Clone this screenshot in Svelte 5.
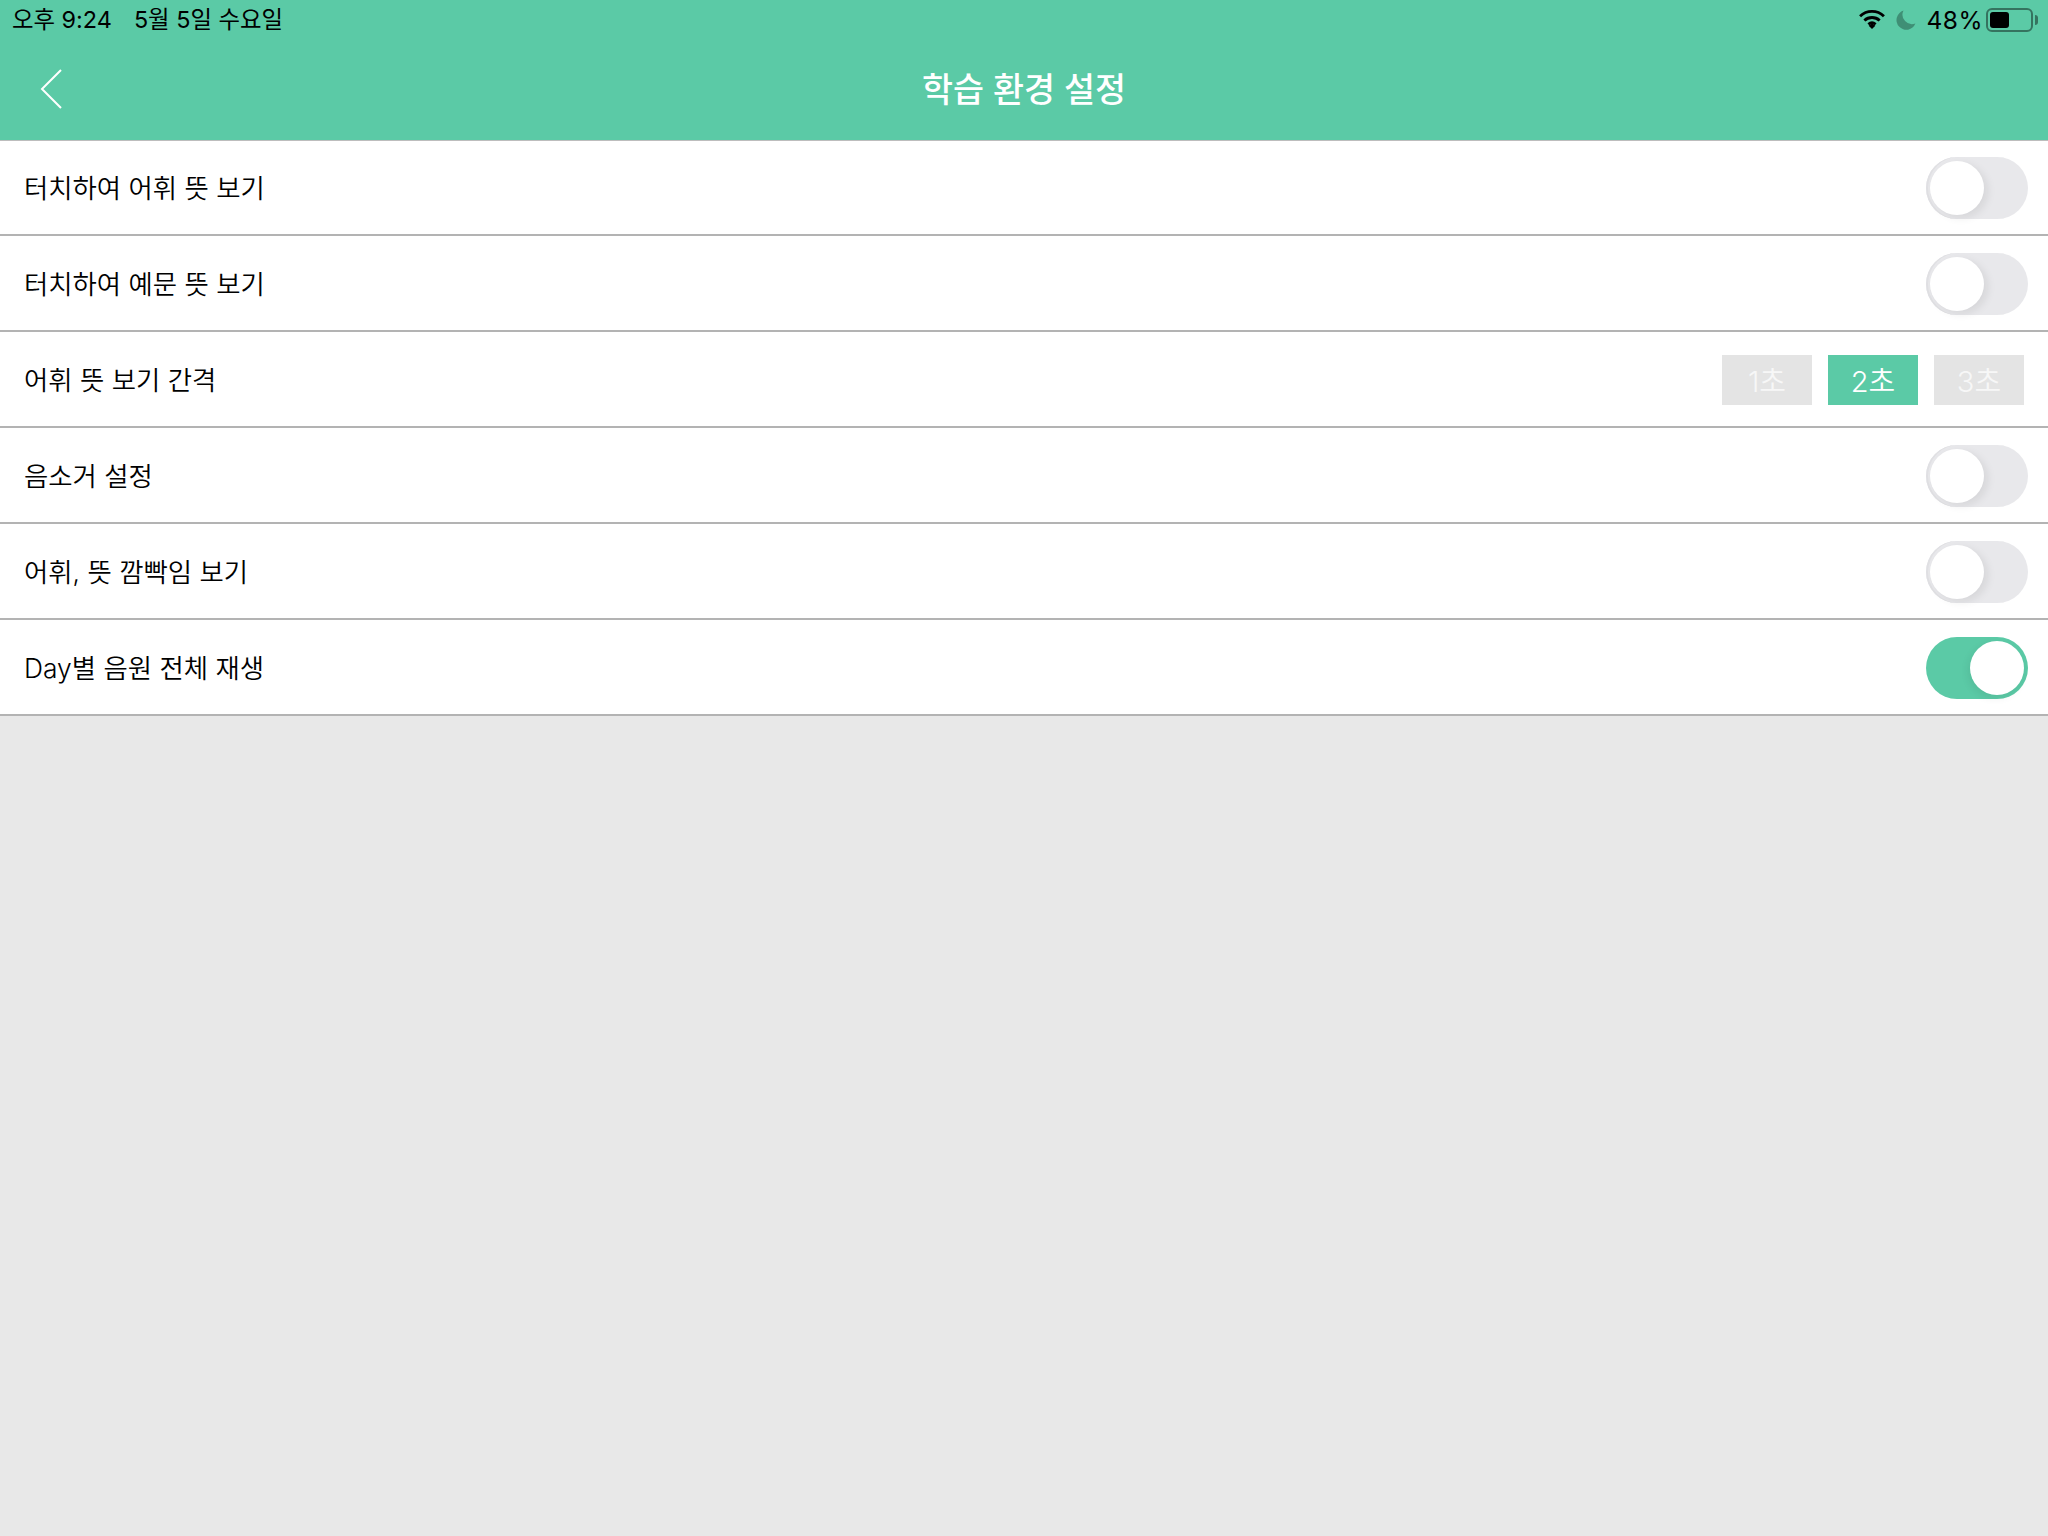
<script>
  const rows = [
    { label: '터치하여 어휘 뜻 보기', type: 'toggle', on: false },
    { label: '터치하여 예문 뜻 보기', type: 'toggle', on: false },
    { label: '어휘 뜻 보기 간격', type: 'seg' },
    { label: '음소거 설정', type: 'toggle', on: false },
    { label: '어휘, 뜻 깜빡임 보기', type: 'toggle', on: false },
    { label: 'Day별 음원 전체 재생', type: 'toggle', on: true }
  ];
  const segs = [
    { t: '1초', on: false },
    { t: '2초', on: true },
    { t: '3초', on: false }
  ];
</script>

<div class="page">
  <header class="head">
    <div class="status">
      <div class="time"><span>오후 9:24</span><span>5월 5일 수요일</span></div>
      <div class="sys">
        <svg class="wifi" width="28" height="21" viewBox="0 0 28 22">
          <path d="M1.5 7.6 A18 18 0 0 1 26.5 7.6" fill="none" stroke="#000" stroke-width="3"/>
          <path d="M6 12 A12 12 0 0 1 22 12" fill="none" stroke="#000" stroke-width="3"/>
          <path d="M10.2 16 A6 6 0 0 1 17.8 16" fill="none" stroke="#000" stroke-width="3"/>
          <path d="M10.5 18.6 L14 15.8 L17.5 18.6 L14 22 Z" fill="#000" transform="translate(0 -1)"/>
        </svg>
        <svg class="moon" width="20" height="20" viewBox="0 0 20 20">
          <path d="M7.5 0.6 A9.8 9.8 0 1 0 19.4 13.6 A9.5 9.5 0 0 1 7.5 0.6 Z" fill="#3f8f75"/>
        </svg>
        <span class="pct">48%</span>
        <div class="batt"><div class="fill"></div></div>
        <div class="nub"></div>
      </div>
    </div>
    <div class="nav">
      <svg class="back" width="24" height="42" viewBox="0 0 24 42">
        <path d="M22 2 L3 21 L22 40" fill="none" stroke="#fff" stroke-width="2"/>
      </svg>
      <h1>학습 환경 설정</h1>
    </div>
  </header>

  <main class="list">
    {#each rows as r}
      <div class="row">
        <span class="label">{r.label}</span>
        {#if r.type === 'toggle'}
          <div class="toggle" class:on={r.on}><div class="knob"></div></div>
        {:else}
          <div class="segs">
            {#each segs as s}
              <div class="seg" class:on={s.on}><span class="seg-text">{s.t}</span></div>
            {/each}
          </div>
        {/if}
      </div>
    {/each}
  </main>
</div>

<style>
  :global(body) { margin: 0; background: #e8e8e8; }
  .page {
    width: 2048px;
    height: 1536px;
    display: flex;
    flex-direction: column;
    background: #e8e8e8;
    font-family: Inter, "Noto Sans CJK KR", sans-serif;
    overflow: hidden;
  }
  .head { height: 140px; background: #5bcaa6; display: flex; flex-direction: column; flex: none; }
  .status {
    height: 36px;
    display: flex;
    justify-content: space-between;
    align-items: center;
    padding: 0 10px 0 12px;
    color: #000;
    font-size: 23.4px;
  }
  .time { display: flex; gap: 22px; }
  .sys { display: flex; align-items: center; margin-top: 3px; }
  .wifi { margin-right: 10px; }
  .moon { margin-right: 10px; }
  .pct { font-size: 24.5px; letter-spacing: 0.5px; margin-right: 3px; }
  .batt {
    width: 39px;
    height: 16px;
    border: 2px solid #35735f;
    border-radius: 6px;
    padding: 2px;
    box-sizing: content-box;
    display: flex;
  }
  .fill { width: 19px; height: 16px; background: #000; border-radius: 3px; }
  .nub { width: 3px; height: 10px; background: #35735f; border-radius: 0 3px 3px 0; margin-left: 2px; }
  .nav { flex: 1; position: relative; display: flex; align-items: center; justify-content: center; }
  .back { position: absolute; left: 39px; top: 32px; }
  h1 { margin: -2px 0 0; font-size: 33.7px; font-weight: 500; color: #fff; }
  .list { display: flex; flex-direction: column; flex: none; }
  .row {
    height: 94px;
    background: #fff;
    border-top: 2px solid #b3b3b3;
    display: flex;
    align-items: center;
    justify-content: space-between;
    padding: 0 20px 0 24px;
  }
  .row:first-child { height: 93px; border-top-width: 1px; border-top-color: #bdbdbd; }
  .row:last-child { border-bottom: 2px solid #b3b3b3; }
  .label { font-size: 26.4px; font-weight: 350; color: #000; margin-top: -2px; }
  .toggle {
    width: 102px;
    height: 62px;
    margin-top: 2px;
    border-radius: 31px;
    background: #e8e8eb;
    position: relative;
    box-shadow: inset 2px 0 0 #e0e0e3;
  }
  .row:first-child .toggle { margin-top: 1px; }
  .toggle.on { background: #5bcaa6; box-shadow: none; }
  .knob {
    position: absolute;
    left: 4px;
    top: 4px;
    width: 54px;
    height: 54px;
    border-radius: 50%;
    background: #fff;
    box-shadow: 4px 3px 8px rgba(0, 0, 0, 0.08);
  }
  .toggle.on .knob { left: 44px; box-shadow: -2px 3px 8px rgba(0, 0, 0, 0.07); }
  .segs { display: flex; gap: 16px; margin: 2px 4px 0 0; }
  .seg {
    width: 90px;
    height: 50px;
    background: #e4e4e4;
    color: #f7f7f7;
    font-size: 29px;
    font-weight: 350;
    display: flex;
    align-items: center;
    justify-content: center;
  }
  .seg-text { margin-top: -2px; }
  .seg.on { background: #5bcaa6; color: #fff; }
</style>
